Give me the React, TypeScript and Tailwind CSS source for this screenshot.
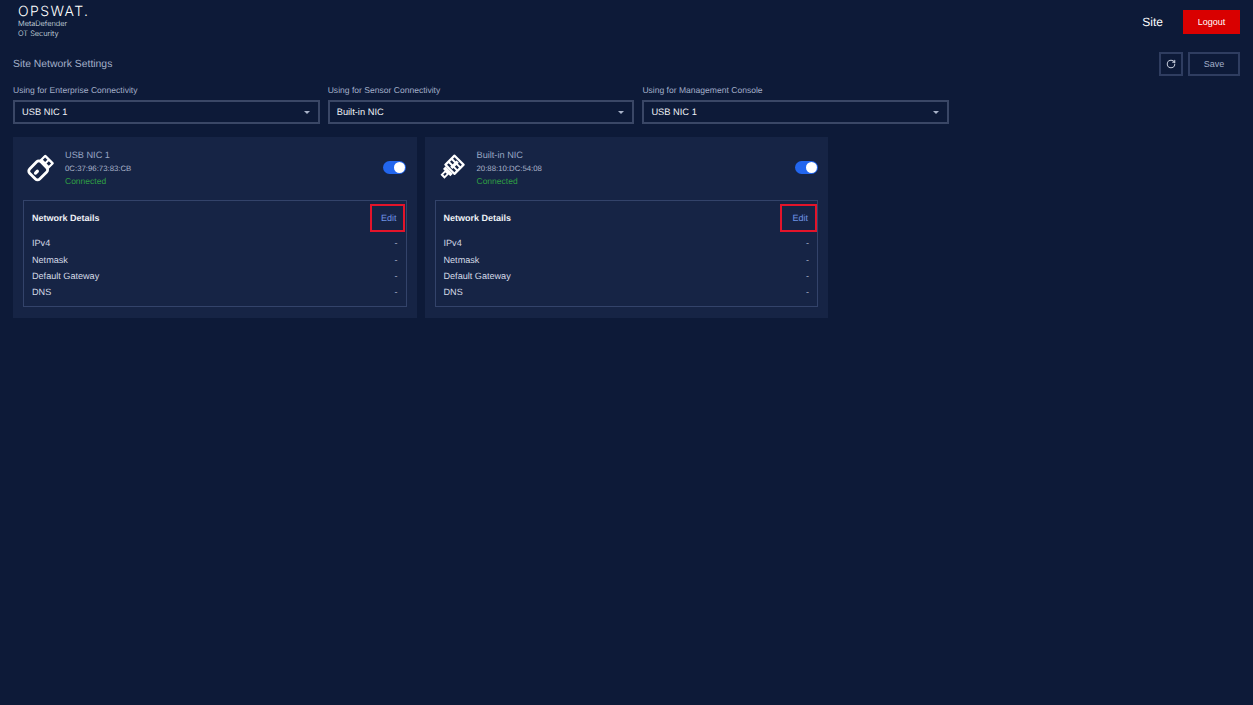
import React from "react"
import { RotateCw } from "lucide-react"

interface Nic {
  name: string
  mac: string
  icon: React.ReactNode
  markClass: string
}

const UsbIcon = () => (
  <svg width="28" height="28" viewBox="-0.6 0 28 28" fill="none">
    <g transform="rotate(45 14 14)">
      <rect x="7.6" y="1" width="12.8" height="11" rx="1.4" fill="#fff" />
      <rect x="9.8" y="3.4" width="3.2" height="3.2" fill="#162445" />
      <rect x="15" y="3.4" width="3.2" height="3.2" fill="#162445" />
      <rect x="6.9" y="9.4" width="14.2" height="16" rx="3" fill="#162445" stroke="#fff" strokeWidth="2.8" />
      <rect x="12.4" y="17" width="3.2" height="5.8" rx="1.6" fill="#fff" />
    </g>
  </svg>
)

const EthernetIcon = () => (
  <svg width="28" height="28" viewBox="1.4 -0.6 28 28" fill="none">
    <g transform="rotate(45 14 14)">
      <rect x="6.4" y="1" width="15.2" height="15" rx="1" fill="#fff" />
      <rect x="8.8" y="3.2" width="10.4" height="2.2" fill="#162445" />
      <rect x="8.8" y="7.4" width="10.4" height="2.2" fill="#162445" />
      <rect x="8.8" y="11.6" width="10.4" height="2.2" fill="#162445" />
      <rect x="12.4" y="4" width="3.2" height="9" fill="#fff" />
      <path d="M8.8 16h10.4v3.6h-2.4v5.9h-5.6v-5.9H8.8z" fill="#fff" />
      <rect x="13" y="20.4" width="2" height="3" fill="#162445" />
    </g>
  </svg>
)

const nics: Nic[] = [
  { name: "USB NIC 1", mac: "0C:37:96:73:83:CB", icon: <UsbIcon />, markClass: "right-[1px] w-[35px]" },
  { name: "Built-in NIC", mac: "20:88:10:DC:54:08", icon: <EthernetIcon />, markClass: "right-0 w-[37px]" },
]

const selects = [
  { label: "Using for Enterprise Connectivity", value: "USB NIC 1" },
  { label: "Using for Sensor Connectivity", value: "Built-in NIC" },
  { label: "Using for Management Console", value: "USB NIC 1" },
]

const details = ["IPv4", "Netmask", "Default Gateway", "DNS"]

const NicCard: React.FC<{ nic: Nic }> = ({ nic }) => (
  <div className="h-[181px] w-[403.5px] bg-[#162445] px-[10px] pt-[4px]">
    <div className="flex h-[53px] items-center">
      <div className="ml-[3px] w-[29px] shrink-0">{nic.icon}</div>
      <div className="ml-[10px] flex-1">
        <div className="text-[9.2px] leading-[14px] text-[#98a6c4]">{nic.name}</div>
        <div className="mt-[1px] text-[7.8px] leading-[12px] text-[#a9b3c9]">{nic.mac}</div>
        <div className="text-[8.5px] leading-[12px] text-[#2f9e44]">Connected</div>
      </div>
      <div className="mr-[0.5px] flex h-[13px] w-[23px] items-center justify-end rounded-full bg-[#2266ee] pr-[1px]">
        <div className="h-[11px] w-[11px] rounded-full bg-white" />
      </div>
    </div>
    <div className="relative mt-[6px] h-[107px] border border-[#33436a] px-[8px]">
      <div className="flex h-[35px] items-center justify-between pt-[1px]">
        <span className="text-[9px] font-bold text-[#eef1f6]">Network Details</span>
        <span className="pr-[1px] text-[9px] text-[#6f93e6]">Edit</span>
      </div>
      <div className={`absolute top-[3px] h-[28px] border-2 border-[#e3142a] ${nic.markClass}`} />
      <div>
        {details.map((d) => (
          <div key={d} className="flex h-[16.3px] items-center justify-between text-[9.1px] text-[#d5dae6]">
            <span>{d}</span>
            <span className="text-[#a9b3c9]">-</span>
          </div>
        ))}
      </div>
    </div>
  </div>
)

export default function App() {
  return (
    <div className="min-h-[705px] bg-[#0d1a38] font-['Liberation_Sans',Arial,sans-serif] [text-rendering:geometricPrecision]">
      <header className="flex h-[44px] items-start justify-between pl-[18px] pr-[13px]">
        <div className="pt-[4px]">
          <div className="font-['Inter',sans-serif] text-[14px] font-light leading-[15px] tracking-[1.4px] text-white">OPSWAT.</div>
          <div className="font-['Inter',sans-serif] text-[7.4px] font-light leading-[10px] text-[#dfe3eb]">MetaDefender</div>
          <div className="font-['Inter',sans-serif] text-[7.4px] font-light leading-[10px] text-[#dfe3eb]">OT Security</div>
        </div>
        <div className="flex items-center pt-[10px]">
          <span className="mr-[20px] text-[12px] text-white">Site</span>
          <button className="h-[24px] w-[57px] bg-[#d90000] pt-[1px] text-[9px] text-white">Logout</button>
        </div>
      </header>

      <div className="px-[13px]">
        <div className="flex h-[32px] items-center justify-between pt-[8px]">
          <h1 className="pt-[1px] text-[10.4px] font-normal text-[#a3afc9]">Site Network Settings</h1>
          <div className="flex gap-[5px]">
            <button className="flex h-[24px] w-[24px] items-center justify-center border-2 border-[#2f3d60] text-[#c5cbd9]">
              <RotateCw size={10} strokeWidth={2.5} />
            </button>
            <button className="h-[24px] w-[52px] border-2 border-[#2f3d60] pt-[1px] text-[9px] text-[#a3afc9]">Save</button>
          </div>
        </div>

        <div className="mt-[6px] flex gap-[8px]">
          {selects.map((s) => (
            <div key={s.label} className="w-[306.7px]">
              <div className="h-[16px] text-[8.55px] leading-[16px] text-[#a3afc9]">{s.label}</div>
              <div className="mt-[2px] flex h-[24px] items-center justify-between border-2 border-[#3a4766] pl-[7px] pr-[8px]">
                <span className="pt-[1px] text-[9.3px] text-[#eef1f6]">{s.value}</span>
                <span className="h-0 w-0 border-x-[3px] border-t-[3px] border-x-transparent border-t-[#a9b3c9]" />
              </div>
            </div>
          ))}
        </div>

        <div className="mt-[13px] flex gap-[8px]">
          {nics.map((n) => (
            <NicCard key={n.name} nic={n} />
          ))}
        </div>
      </div>
    </div>
  )
}
